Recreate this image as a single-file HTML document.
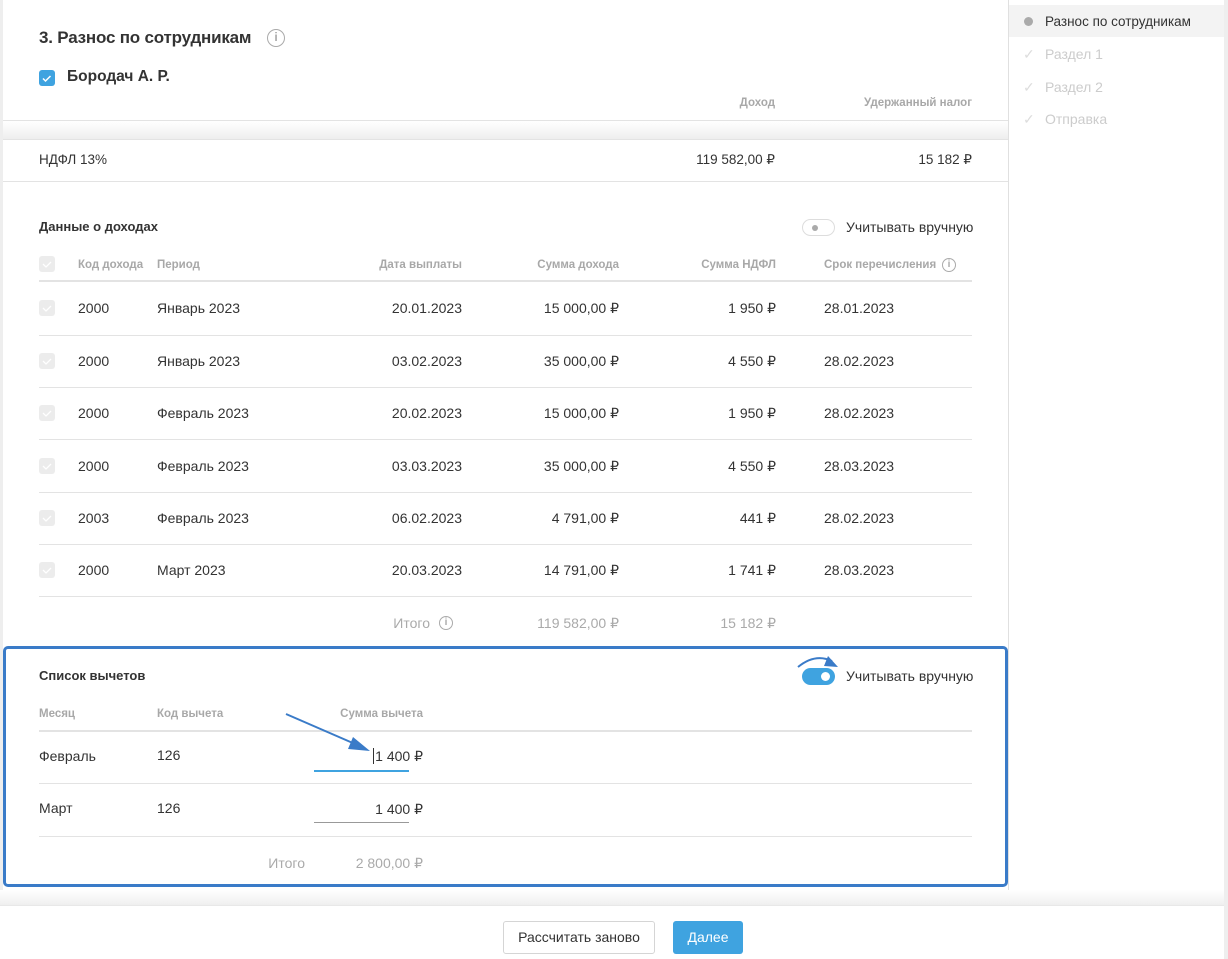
<!DOCTYPE html>
<html><head><meta charset="utf-8"><style>
*{margin:0;padding:0;box-sizing:border-box}
body{width:1228px;height:959px;position:relative;overflow:hidden;background:#fff;font-family:"Liberation Sans",sans-serif;font-size:14px;color:#333}
.a{position:absolute;white-space:nowrap;line-height:16px}
.r{text-align:right}
.h{font-size:11.5px;font-weight:bold;color:#a8a8a8}
.g{color:#aaa}
.ln{position:absolute;height:1px;background:#e3e3e3}
.cb{position:absolute;width:16px;height:16px;border-radius:3px;background:#ececec}
.cb svg{position:absolute;left:3px;top:4px}
.info{position:absolute;width:14px;height:14px;border:1.3px solid #aaa;border-radius:50%;font-size:10px;color:#aaa;text-align:center;line-height:11px;font-weight:bold}
</style></head><body>
<div style="position:absolute;left:0;top:0;width:3px;height:905px;background:#eee"></div>
<div style="position:absolute;left:1008px;top:0;width:1px;height:905px;background:#e0e0e0"></div>
<div style="position:absolute;left:1224px;top:0;width:4px;height:959px;background:#eee"></div>
<!-- sidebar -->
<div style="position:absolute;left:1009px;top:5px;width:215px;height:32px;background:#f3f3f3"></div>
<div style="position:absolute;left:1024px;top:17px;width:9px;height:9px;border-radius:50%;background:#aaa"></div>
<div class="a" style="left:1045px;top:14px;color:#333;font-size:13.5px">Разнос по сотрудникам</div>
<div class="a" style="left:1023px;top:46px;color:#ddd">✓</div><div class="a" style="left:1045px;top:46px;color:#ccc">Раздел 1</div>
<div class="a" style="left:1023px;top:79px;color:#ddd">✓</div><div class="a" style="left:1045px;top:79px;color:#ccc">Раздел 2</div>
<div class="a" style="left:1023px;top:111px;color:#ddd">✓</div><div class="a" style="left:1045px;top:111px;color:#ccc">Отправка</div>
<!-- top -->
<div class="a" style="left:39px;top:28px;font-size:17px;line-height:20px;font-weight:bold;color:#333;letter-spacing:-0.2px">3. Разнос по сотрудникам</div>
<div class="info" style="left:267px;top:29px;width:18px;height:18px;font-size:12px;line-height:15px">i</div>
<div style="position:absolute;left:39px;top:70px;width:16px;height:16px;border-radius:3px;background:#3fa3e0"><svg width="16" height="16"><path d="M4 8.5l2.5 2.5 5-5" stroke="#fff" stroke-width="1.5" fill="none"/></svg></div>
<div class="a" style="left:67px;top:68px;font-size:15.5px;line-height:18px;font-weight:bold">Бородач А. Р.</div>
<div class="a h r" style="right:453px;top:95px">Доход</div>
<div class="a h r" style="right:256px;top:95px">Удержанный налог</div>
<div class="ln" style="left:3px;top:120px;width:1005px"></div>
<div style="position:absolute;left:3px;top:121px;width:1005px;height:18px;background:linear-gradient(#fff,#eee)"></div>
<div class="ln" style="left:3px;top:139px;width:1005px"></div>
<div class="a" style="left:39px;top:152px;font-size:13.5px">НДФЛ 13%</div>
<div class="a r" style="right:453px;top:152px;font-size:13.5px">119 582,00 ₽</div>
<div class="a r" style="right:256px;top:152px;font-size:13.5px">15 182 ₽</div>
<div class="ln" style="left:3px;top:181px;width:1005px"></div>
<!-- income -->
<div class="a" style="left:39px;top:219px;font-size:13px;font-weight:bold">Данные о доходах</div>
<div style="position:absolute;left:802px;top:219px;width:33px;height:17px;border:1px solid #ddd;border-radius:9px"><div style="position:absolute;left:9px;top:5px;width:6px;height:6px;border-radius:50%;background:#aaa"></div></div>
<div class="a" style="left:846px;top:219px">Учитывать вручную</div>
<div class="cb" style="left:39px;top:256px"><svg width="10" height="8"><path d="M1 4l3 3 5-5" stroke="#fff" stroke-width="1.3" fill="none"/></svg></div>
<div class="a h" style="left:78px;top:257px">Код дохода</div>
<div class="a h" style="left:157px;top:257px">Период</div>
<div class="a h r" style="right:766px;top:257px">Дата выплаты</div>
<div class="a h r" style="right:609px;top:257px">Сумма дохода</div>
<div class="a h r" style="right:452px;top:257px">Сумма НДФЛ</div>
<div class="a h" style="left:824px;top:257px">Срок перечисления</div>
<div class="info" style="left:942px;top:258px">i</div>
<div class="ln" style="left:39px;top:280px;width:933px;height:2px"></div>

<div class="cb" style="left:39px;top:300px"><svg width="10" height="8"><path d="M1 4l3 3 5-5" stroke="#fff" stroke-width="1.3" fill="none"/></svg></div>
<div class="a" style="left:78px;top:300px">2000</div><div class="a" style="left:157px;top:300px">Январь 2023</div><div class="a r" style="right:766px;top:300px">20.01.2023</div><div class="a r" style="right:609px;top:300px">15 000,00 ₽</div><div class="a r" style="right:452px;top:300px">1 950 ₽</div><div class="a" style="left:824px;top:300px">28.01.2023</div>
<div class="ln" style="left:39px;top:335px;width:933px"></div>
<div class="cb" style="left:39px;top:353px"><svg width="10" height="8"><path d="M1 4l3 3 5-5" stroke="#fff" stroke-width="1.3" fill="none"/></svg></div>
<div class="a" style="left:78px;top:353px">2000</div><div class="a" style="left:157px;top:353px">Январь 2023</div><div class="a r" style="right:766px;top:353px">03.02.2023</div><div class="a r" style="right:609px;top:353px">35 000,00 ₽</div><div class="a r" style="right:452px;top:353px">4 550 ₽</div><div class="a" style="left:824px;top:353px">28.02.2023</div>
<div class="ln" style="left:39px;top:387px;width:933px"></div>
<div class="cb" style="left:39px;top:405px"><svg width="10" height="8"><path d="M1 4l3 3 5-5" stroke="#fff" stroke-width="1.3" fill="none"/></svg></div>
<div class="a" style="left:78px;top:405px">2000</div><div class="a" style="left:157px;top:405px">Февраль 2023</div><div class="a r" style="right:766px;top:405px">20.02.2023</div><div class="a r" style="right:609px;top:405px">15 000,00 ₽</div><div class="a r" style="right:452px;top:405px">1 950 ₽</div><div class="a" style="left:824px;top:405px">28.02.2023</div>
<div class="ln" style="left:39px;top:439px;width:933px"></div>
<div class="cb" style="left:39px;top:458px"><svg width="10" height="8"><path d="M1 4l3 3 5-5" stroke="#fff" stroke-width="1.3" fill="none"/></svg></div>
<div class="a" style="left:78px;top:458px">2000</div><div class="a" style="left:157px;top:458px">Февраль 2023</div><div class="a r" style="right:766px;top:458px">03.03.2023</div><div class="a r" style="right:609px;top:458px">35 000,00 ₽</div><div class="a r" style="right:452px;top:458px">4 550 ₽</div><div class="a" style="left:824px;top:458px">28.03.2023</div>
<div class="ln" style="left:39px;top:492px;width:933px"></div>
<div class="cb" style="left:39px;top:510px"><svg width="10" height="8"><path d="M1 4l3 3 5-5" stroke="#fff" stroke-width="1.3" fill="none"/></svg></div>
<div class="a" style="left:78px;top:510px">2003</div><div class="a" style="left:157px;top:510px">Февраль 2023</div><div class="a r" style="right:766px;top:510px">06.02.2023</div><div class="a r" style="right:609px;top:510px">4 791,00 ₽</div><div class="a r" style="right:452px;top:510px">441 ₽</div><div class="a" style="left:824px;top:510px">28.02.2023</div>
<div class="ln" style="left:39px;top:544px;width:933px"></div>
<div class="cb" style="left:39px;top:562px"><svg width="10" height="8"><path d="M1 4l3 3 5-5" stroke="#fff" stroke-width="1.3" fill="none"/></svg></div>
<div class="a" style="left:78px;top:562px">2000</div><div class="a" style="left:157px;top:562px">Март 2023</div><div class="a r" style="right:766px;top:562px">20.03.2023</div><div class="a r" style="right:609px;top:562px">14 791,00 ₽</div><div class="a r" style="right:452px;top:562px">1 741 ₽</div><div class="a" style="left:824px;top:562px">28.03.2023</div>
<div class="ln" style="left:39px;top:596px;width:933px"></div>
<div class="a g r" style="right:798px;top:615px">Итого</div>
<div class="info" style="left:439px;top:616px">i</div>
<div class="a g r" style="right:609px;top:615px">119 582,00 ₽</div>
<div class="a g r" style="right:452px;top:615px">15 182 ₽</div>
<!-- deductions box -->
<div style="position:absolute;left:3px;top:646px;width:1005px;height:241px;border:3px solid #3a7bc8;border-radius:5px"></div>
<div class="a" style="left:39px;top:668px;font-size:13px;font-weight:bold">Список вычетов</div>
<div style="position:absolute;left:802px;top:668px;width:33px;height:17px;border-radius:9px;background:#3fa3e0"><div style="position:absolute;left:19px;top:4px;width:9px;height:9px;border-radius:50%;background:#fff"></div></div>
<svg style="position:absolute;left:790px;top:650px" width="60" height="30"><path d="M8 17 Q25 3 42 11" stroke="#3a7bc8" stroke-width="2" fill="none"/><path d="M38 6 L48 17 L34 16 Z" fill="#3a7bc8"/></svg>
<div class="a" style="left:846px;top:668px">Учитывать вручную</div>
<div class="a h" style="left:39px;top:706px">Месяц</div>
<div class="a h" style="left:157px;top:706px">Код вычета</div>
<div class="a h r" style="right:805px;top:706px">Сумма вычета</div>
<div class="ln" style="left:39px;top:730px;width:933px;height:2px"></div>
<div class="a" style="left:39px;top:748px">Февраль</div><div class="a" style="left:157px;top:747px">126</div>
<div class="a r" style="right:805px;top:748px"><span style="border-left:1px solid #333;margin-right:1px"></span>1 400 ₽</div>
<div style="position:absolute;left:314px;top:770px;width:95px;height:2px;background:#3fa3e0"></div>
<svg style="position:absolute;left:280px;top:708px" width="95" height="45"><path d="M6 6 L82 39" stroke="#3a7bc8" stroke-width="2"/><path d="M73 29 L90 43 L68 41 Z" fill="#3a7bc8"/></svg>
<div class="ln" style="left:39px;top:783px;width:933px"></div>
<div class="a" style="left:39px;top:800px">Март</div><div class="a" style="left:157px;top:800px">126</div>
<div class="a r" style="right:805px;top:801px">1 400 ₽</div>
<div style="position:absolute;left:314px;top:822px;width:95px;height:1px;background:#999"></div>
<div class="ln" style="left:39px;top:836px;width:933px"></div>
<div class="a g r" style="right:923px;top:855px">Итого</div>
<div class="a g r" style="right:805px;top:855px">2 800,00 ₽</div>
<!-- bottom bar -->
<div style="position:absolute;left:0;top:890px;width:1224px;height:15px;background:linear-gradient(#fff,#efefef)"></div>
<div style="position:absolute;left:0;top:905px;width:1224px;height:54px;background:#fff;border-top:1px solid #e8e8e8"></div>
<div style="position:absolute;left:503px;top:921px;width:152px;height:33px;border:1px solid #d5d5d5;border-radius:3px;text-align:center;line-height:31px;font-size:14px">Рассчитать заново</div>
<div style="position:absolute;left:673px;top:921px;width:70px;height:33px;background:#3fa3e0;border-radius:3px;text-align:center;line-height:33px;color:#fff;font-size:14px">Далее</div>
</body></html>
